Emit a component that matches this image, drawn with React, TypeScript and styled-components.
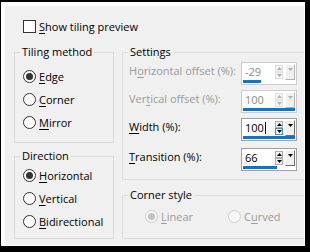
import React from 'react';
import styled, { createGlobalStyle } from 'styled-components';

const GlobalStyle = createGlobalStyle`
  html, body {
    margin: 0;
    padding: 0;
    background: #000;
  }
  body {
    font-family: "Open Sans", "Noto Sans", sans-serif;
    font-size: 11px;
    color: #000;
  }
`;

const Frame = styled.div`
  box-sizing: border-box;
  width: 304px;
  height: 244px;
  margin: 2px 0 0 1px;
  padding: 4px 1px 1px 4px;
  background: #fff;
`;

const Panel = styled.div`
  box-sizing: border-box;
  height: 100%;
  padding: 13px 0 6px 9px;
  background: #f0f0f0;
  display: flex;
  flex-direction: column;
  overflow: hidden;
`;

const CheckRow = styled.label`
  display: flex;
  align-items: center;
  gap: 3px;
  height: 15px;
  padding-left: 9px;
`;

const CheckSquare = styled.span`
  box-sizing: border-box;
  width: 13px;
  height: 13px;
  border: 1px solid #333;
  background: #fff;
`;

const Key = styled.span`
  text-decoration: underline;
  text-underline-offset: 2px;
`;

const Columns = styled.div`
  flex: 1;
  margin-top: 10px;
  display: grid;
  grid-template-columns: 100px 1fr;
  column-gap: 8px;
`;

const Column = styled.div`
  display: flex;
  flex-direction: column;
`;

const Group = styled.fieldset<{ $grow?: boolean; $space?: number; $open?: boolean }>`
  margin: ${(p) => p.$space || 0}px 0 0 0;
  padding: 0;
  min-width: 0;
  border: 1px solid #dcdcdc;
  border-right: ${(p) => (p.$open ? 'none' : '1px solid #dcdcdc')};
  flex: ${(p) => (p.$grow ? 1 : 'none')};
`;

const Caption = styled.legend`
  margin-left: 5px;
  padding: 0 2px;
  line-height: 16px;
`;

const GroupBody = styled.div<{ $pad: string }>`
  padding: ${(p) => p.$pad};
`;

const RadioRow = styled.label<{ $width?: number }>`
  display: flex;
  align-items: center;
  gap: 3px;
  height: 23px;
  width: ${(p) => (p.$width ? `${p.$width}px` : 'auto')};
`;

const RadioLine = styled.div`
  display: flex;
`;

const RadioCircle = styled.span<{ $checked?: boolean; $disabled?: boolean }>`
  box-sizing: border-box;
  width: 13px;
  height: 13px;
  border-radius: 50%;
  border: 1px solid ${(p) => (p.$disabled ? '#cccccc' : '#333')};
  background: ${(p) => (p.$disabled ? '#f7f7f7' : '#fff')};
  display: flex;
  align-items: center;
  justify-content: center;

  &::after {
    content: '';
    width: 7px;
    height: 7px;
    border-radius: 50%;
    background: ${(p) => (p.$checked ? (p.$disabled ? '#c2c2c2' : '#333') : 'transparent')};
  }
`;

const Text = styled.span<{ $disabled?: boolean }>`
  color: ${(p) => (p.$disabled ? '#9a9a9a' : '#000')};
  white-space: nowrap;
`;

const SettingRow = styled.div<{ $space?: number }>`
  display: grid;
  grid-template-columns: 1fr 56px;
  height: 23px;
  margin-top: ${(p) => p.$space || 0}px;
`;

const SettingLabel = styled(Text)`
  line-height: 17px;
`;

const SpinFrame = styled.div<{ $disabled?: boolean }>`
  box-sizing: border-box;
  width: 56px;
  height: 23px;
  padding: 1px;
  border: 1px solid ${(p) => (p.$disabled ? '#cccccc' : '#a0a0a0')};
  background: #fff;
  display: grid;
  grid-template-columns: 1fr 8px 10px;
  grid-template-rows: 16px 3px;
  column-gap: 2px;
`;

const SpinValue = styled.span<{ $disabled?: boolean }>`
  padding-left: 2px;
  line-height: 16px;
  color: ${(p) => (p.$disabled ? '#8a8a8a' : '#000')};
  display: flex;
  align-items: center;
`;

const Caret = styled.span`
  width: 1px;
  height: 12px;
  margin-left: 1px;
  background: #000;
`;

const Arrows = styled.div`
  display: flex;
  flex-direction: column;
  margin: 1px 0;
`;

const ArrowButton = styled.span<{ $disabled?: boolean; $hot?: boolean }>`
  box-sizing: border-box;
  height: 7px;
  display: flex;
  align-items: center;
  justify-content: center;
  border: 1px solid
    ${(p) => (p.$disabled ? '#e2e2e2' : p.$hot ? '#3c8fd9' : '#adadad')};
  background: ${(p) => (p.$hot ? '#e5f1fb' : p.$disabled ? '#f4f4f4' : '#f0f0f0')};
`;

const DropButton = styled.span<{ $disabled?: boolean }>`
  box-sizing: border-box;
  display: flex;
  justify-content: center;
  padding-top: 3px;
  border-top: 1px solid #fff;
  border-left: 1px solid #fff;
  border-right: 1px solid ${(p) => (p.$disabled ? '#b4b4b4' : '#6d6d6d')};
  border-bottom: 1px solid ${(p) => (p.$disabled ? '#b4b4b4' : '#6d6d6d')};
  background: #f0f0f0;
`;

const Track = styled.div`
  grid-column: 1 / -1;
`;

const Fill = styled.div`
  height: 100%;
  background: #0078d7;
`;

const Tri: React.FC<{ down?: boolean; color: string }> = ({ down, color }) => (
  <svg width="5" height="3" viewBox="0 0 5 3">
    <path d={down ? 'M0 0H5L2.5 3Z' : 'M0 3H5L2.5 0Z'} fill={color} />
  </svg>
);

interface SpinProps {
  value: number;
  min: number;
  max: number;
  disabled?: boolean;
  focused?: boolean;
}

const Spin: React.FC<SpinProps> = ({ value, min, max, disabled, focused }) => {
  const pct = ((value - min) / (max - min)) * 100;
  const ink = disabled ? '#b0b0b0' : '#000';
  return (
    <SpinFrame $disabled={disabled}>
      <SpinValue $disabled={disabled}>
        {value}
        {focused && <Caret />}
      </SpinValue>
      <Arrows>
        <ArrowButton $disabled={disabled}>
          <Tri color={ink} />
        </ArrowButton>
        <ArrowButton $disabled={disabled} $hot={focused}>
          <Tri down color={ink} />
        </ArrowButton>
      </Arrows>
      <DropButton $disabled={disabled}>
        <Tri down color={ink} />
      </DropButton>
      <Track>
        <Fill style={{ width: `${pct}%` }} />
      </Track>
    </SpinFrame>
  );
};

interface RadioProps {
  checked?: boolean;
  disabled?: boolean;
  width?: number;
  children: React.ReactNode;
}

const Radio: React.FC<RadioProps> = ({ checked, disabled, width, children }) => (
  <RadioRow $width={width}>
    <RadioCircle $checked={checked} $disabled={disabled} />
    <Text $disabled={disabled}>{children}</Text>
  </RadioRow>
);

export default function App() {
  return (
    <>
      <GlobalStyle />
      <Frame>
        <Panel>
          <CheckRow>
            <CheckSquare />
            <Text>
              <Key>S</Key>how tiling preview
            </Text>
          </CheckRow>
          <Columns>
            <Column>
              <Group>
                <Caption>Tiling method</Caption>
                <GroupBody $pad="5px 0 8px 8px">
                  <Radio checked>
                    <Key>E</Key>dge
                  </Radio>
                  <Radio>
                    <Key>C</Key>orner
                  </Radio>
                  <Radio>
                    <Key>M</Key>irror
                  </Radio>
                </GroupBody>
              </Group>
              <Group $grow $space={5}>
                <Caption>Direction</Caption>
                <GroupBody $pad="0 0 0 8px">
                  <Radio checked>
                    <Key>H</Key>orizontal
                  </Radio>
                  <Radio>
                    <Key>V</Key>ertical
                  </Radio>
                  <Radio>
                    <Key>B</Key>idirectional
                  </Radio>
                </GroupBody>
              </Group>
            </Column>
            <Column>
              <Group $open>
                <Caption>Settings</Caption>
                <GroupBody $pad="2px 7px 8px 6px">
                  <SettingRow>
                    <SettingLabel $disabled>
                      H<Key>o</Key>rizontal offset (%):
                    </SettingLabel>
                    <Spin value={-29} min={-100} max={100} disabled />
                  </SettingRow>
                  <SettingRow $space={5}>
                    <SettingLabel $disabled>
                      Ver<Key>t</Key>ical offset (%):
                    </SettingLabel>
                    <Spin value={100} min={-100} max={100} disabled />
                  </SettingRow>
                  <SettingRow $space={5}>
                    <SettingLabel>
                      <Key>W</Key>idth (%):
                    </SettingLabel>
                    <Spin value={100} min={0} max={100} focused />
                  </SettingRow>
                  <SettingRow $space={7}>
                    <SettingLabel>
                      <Key>T</Key>ransition (%):
                    </SettingLabel>
                    <Spin value={66} min={0} max={100} />
                  </SettingRow>
                </GroupBody>
              </Group>
              <Group $open $grow $space={7}>
                <Caption>Corner style</Caption>
                <GroupBody $pad="2px 0 0 22px">
                  <RadioLine>
                    <Radio checked disabled width={83}>
                      <Key>L</Key>inear
                    </Radio>
                    <Radio disabled>
                      C<Key>u</Key>rved
                    </Radio>
                  </RadioLine>
                </GroupBody>
              </Group>
            </Column>
          </Columns>
        </Panel>
      </Frame>
    </>
  );
}
